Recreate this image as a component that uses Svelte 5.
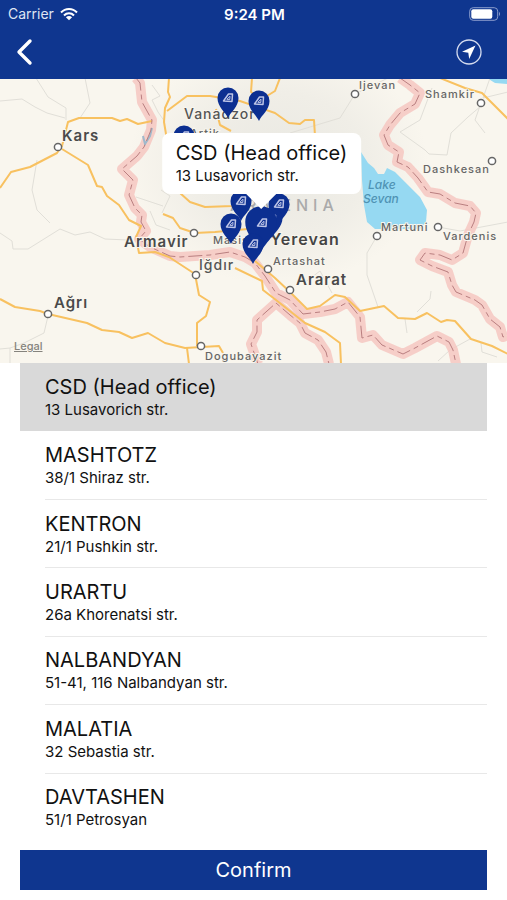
<script lang="ts">
    type Branch = { name: string; address: string }
    type Label = { text: string; x: number; y: number; kind: string }

    const branches: Branch[] = [
        { name: "CSD (Head office)", address: "13 Lusavorich str." },
        { name: "MASHTOTZ", address: "38/1 Shiraz str." },
        { name: "KENTRON", address: "21/1 Pushkin str." },
        { name: "URARTU", address: "26a Khorenatsi str." },
        { name: "NALBANDYAN", address: "51-41, 116 Nalbandyan str." },
        { name: "MALATIA", address: "32 Sebastia str." },
        { name: "DAVTASHEN", address: "51/1 Petrosyan" },
    ]

    let selected = $state(0)
    let current = $derived(branches[selected])

    const labels: Label[] = [
        { text: "Kars", x: 62, y: 141, kind: "city" },
        { text: "Vanadzor", x: 184, y: 119, kind: "town" },
        { text: "Artik", x: 190, y: 137, kind: "village" },
        { text: "Ijevan", x: 359, y: 89, kind: "village" },
        { text: "Shamkir", x: 425, y: 98, kind: "village" },
        { text: "Dashkesan", x: 423, y: 173, kind: "village" },
        { text: "Martuni", x: 381, y: 231, kind: "village" },
        { text: "Vardenis", x: 443, y: 240, kind: "village" },
        { text: "Armavir", x: 124, y: 247, kind: "city" },
        { text: "Masis", x: 213, y: 244, kind: "village" },
        { text: "Yerevan", x: 270, y: 245, kind: "capital" },
        { text: "Iğdır", x: 199, y: 270, kind: "town" },
        { text: "Artashat", x: 273, y: 265, kind: "village" },
        { text: "Ararat", x: 296, y: 285, kind: "city" },
        { text: "Ağrı", x: 54, y: 308, kind: "city" },
        { text: "Dogubayazit", x: 205, y: 360, kind: "village" },
        { text: "ARMENIA", x: 230, y: 211, kind: "country" },
        { text: "Lake", x: 368, y: 189, kind: "water" },
        { text: "Sevan", x: 363, y: 203, kind: "water" },
    ]

    const towns = [
        [58, 147], [355, 94], [481, 103], [492, 161], [377, 236], [438, 227],
        [194, 233], [196, 275], [268, 269], [290, 290], [48, 314], [201, 346],
    ]

    const pins = [
        [228, 118], [259, 121], [184, 156], [241, 221], [279, 224], [231, 244],
    ]

    const borders = [
        "M136 78L140 83L142 102L152 120L151 130L144 147L137 156L122 169L133 180L129 195L135 208L142 215L141 222L146 231L139 239L150 247L170 256L180 257L210 255L230 252L245 257L255 263L265 276L276 293L290 300L303 314L320 312L335 309L348 302L360 317L362 338L373 335L382 345L403 354L415 348L437 336L449 342L453 350L456 364",
        "M258 364L251 344L257 332L257 320L276 303L290 315L300 323L305 333L318 340L326 352L329 364",
        "M400 78L410 85L420 93L415 104L400 113L390 125L384 135L388 145L399 152L397 162L408 167L418 178L428 192L440 194L455 203L470 206L476 213L474 222L468 235L463 253L452 260L440 255L425 253L420 260L432 266L448 272L452 285L456 292L475 300L482 305L490 319L500 327L503 337L508 335",
    ]

    const roads = [
        "M0 188L11 172L30 167L57 153L62 146L68 122L79 118L112 118L120 121L127 119L138 124L152 121",
        "M62 149L88 165L97 186L102 187L107 196L119 205L129 220L141 226L136 237L139 253L155 252L169 257L195 274L199 295L210 302L206 316L197 323L197 346",
        "M0 299L15 307L40 311L48 314L87 323L102 330L119 332L132 338L148 333L165 343L185 348L219 346L223 353",
        "M187 348L189 364",
        "M235 268L262 281L263 290L276 300L305 323L325 332L340 343L341 364",
        "M255 261L275 278L290 292L307 309L320 306L335 295L345 297L360 311L384 306L398 318L415 319L427 313L441 322L447 320L455 321L471 339L492 346L508 354",
        "M163 214L173 218L180 228L195 233L215 232L248 229",
        "M180 193L190 202L205 207L232 206L240 202",
        "M169 78L168 92L170 97L165 108L164 122L167 140",
        "M167 111L187 96L210 96L240 101L275 113L289 123L300 124L305 120L314 120L315 136",
        "M252 78L251 92L262 99L275 91L280 78",
        "M216 109L220 125L231 131",
        "M440 78L465 88L482 93L508 119",
    ]

    const lanes = [
        "M0 101L22 99L35 107L47 113L65 118",
        "M36 78L48 97L66 108L66 120",
        "M85 78L90 103L80 118",
        "M37 160L32 190L37 210L50 223",
        "M0 233L12 241L13 249L28 249L60 229L75 235L90 232L105 239L128 240",
        "M48 316L44 333L24 343L10 348L0 349",
        "M10 348L10 364",
        "M152 85L160 96L152 100L158 112L165 122",
        "M136 197L163 206M161 190L170 196L162 213",
        "M290 133L340 118L355 94L388 78",
        "M432 88L420 120L400 132L425 150L429 154L447 155L451 133L468 117L481 106",
        "M481 103L475 120L485 133M490 78L483 98L508 92",
        "M377 236L367 253L367 275L378 307",
        "M431 291L430 299L417 312M405 319L407 333",
        "M438 227L460 231L508 222",
        "M470 339L450 350L438 361M481 343L482 352L497 357",
        "M304 283L320 271L332 293M170 230L156 225L150 211",
    ]
</script>

<div class="screen">
    <header>
        <div class="status">
            <span class="carrier">
                Carrier
                <svg width="18" height="14" viewBox="0 0 18 14" aria-hidden="true">
                    <g fill="none" stroke="white" stroke-width="2">
                        <path d="M1 5.500C5.500 .8 12.500 .8 17 5.500" />
                        <path d="M4 8.500C6.800 5.600 11.200 5.600 14 8.500" />
                    </g>
                    <path d="M5.900 10.300Q9 7.600 12.100 10.300L9 13.300Z" fill="white" />
                </svg>
            </span>
            <time>9:24 PM</time>
            <svg class="battery" width="32" height="14" viewBox="0 0 32 14" aria-hidden="true">
                <rect x=".7" y=".7" width="28" height="12.600" rx="3.500" fill="none" stroke="#8b9dcc" />
                <rect x="2.300" y="2.300" width="21" height="9.400" rx="2" fill="white" />
                <path d="M30 4.800Q32 7 30 9.200Z" fill="#8b9dcc" />
            </svg>
        </div>
        <nav>
            <button class="icon" aria-label="Back">
                <svg width="18" height="28" viewBox="0 0 18 28">
                    <path
                        d="M15 3L4 14L15 25"
                        fill="none"
                        stroke="white"
                        stroke-width="3.400"
                        stroke-linecap="round"
                        stroke-linejoin="round"
                    />
                </svg>
            </button>
            <button class="icon" aria-label="Show my location">
                <svg width="26" height="26" viewBox="0 0 26 26">
                    <circle cx="13" cy="13" r="12" fill="none" stroke="#d5dcef" stroke-width="1.300" />
                    <path d="M19.500 6.500L6 12.800L12.300 13.800L13.200 20Z" fill="white" />
                </svg>
            </button>
        </nav>
    </header>

    <section class="map" aria-label="Branch map">
        <svg class="canvas" viewBox="0 79 507 284" preserveAspectRatio="xMidYMid slice">
            <defs>
                <radialGradient id="relief">
                    <stop offset="0" stop-color="#e9e8e2" />
                    <stop offset=".6" stop-color="#f0eee7" />
                    <stop offset="1" stop-color="#f9f6ee" />
                </radialGradient>
                <path
                    id="drop"
                    d="M0 0C-2.500 -6 -10.500 -11 -10.500 -20A10.500 10.500 0 0 1 10.500 -20C10.500 -11 2.500 -6 0 0Z"
                    fill="#0c2f91"
                />
                <g id="logo" fill="none" stroke="#bcc4e6" stroke-linejoin="round">
                    <path d="M-4.500 3L.5 -4L4.500 -4L4 3.500Z" stroke-width="1.500" />
                    <path d="M-1.200 1.300L2 -1.800L1.800 1.500Z" stroke-width="1" />
                </g>
            </defs>
            <rect y="79" width="507" height="284" fill="#f9f6ee" />
            <ellipse cx="278" cy="165" rx="150" ry="120" fill="url(#relief)" />
            <path
                d="M361 152L368 163L374 168L378 174L384 174L387 168L395 172L405 182L420 197L427 210L426 222L420 229L375 229L367 222L364 205L362 180Z"
                fill="#96d9f2"
            />
            <path d="M487 78L495 83L508 84V78Z" fill="#96d9f2" />
            {#each lanes as d}
                <path {d} class="lane" />
            {/each}
            {#each borders as d}
                <path {d} class="border-glow" />
            {/each}
            <path d="M143 136L145 144L150 136L152 128" fill="none" stroke="#9fb9cc" stroke-width="2" />
            {#each roads as d}
                <path {d} class="road" />
            {/each}
            {#each borders as d}
                <path {d} class="border-line" />
            {/each}
            {#each towns as [cx, cy]}
                <circle {cx} {cy} r="3.600" class="town-dot" />
            {/each}
            {#each labels as label}
                <text x={label.x} y={label.y} class={label.kind}>{label.text}</text>
            {/each}
            {#each pins as [x, y]}
                <use href="#drop" {x} {y} />
                <use href="#logo" {x} y={y - 20} />
            {/each}
            <use href="#drop" x="272" y="238" />
            <path d="M274 215L276 215L275 222" fill="none" stroke="#7f8fc8" />
            <use href="#drop" transform="translate(261 252) scale(1.500)" />
            <use href="#logo" x="262" y="223" />
            <use href="#drop" x="253" y="264" />
            <use href="#logo" x="253" y="244" />
        </svg>
        <div class="callout">
            <strong>{current.name}</strong>
            <span>{current.address}</span>
        </div>
        <a class="legal" href="#legal">Legal</a>
    </section>

    <ul>
        {#each branches as branch, i}
            <li class:active={i === selected}>
                <button class="branch" onclick={() => (selected = i)}>
                    <strong>{branch.name}</strong>
                    <span>{branch.address}</span>
                </button>
            </li>
        {/each}
    </ul>

    <footer>
        <button class="confirm">Confirm</button>
    </footer>
</div>

<style>
    :global(body) {
        margin: 0;
        background: white;
    }
    .screen {
        min-height: 100vh;
        display: flex;
        flex-direction: column;
        font-family: Inter, "Liberation Sans", sans-serif;
        color: #111;
    }
    button {
        font: inherit;
        color: inherit;
        border: 0;
        padding: 0;
        background: none;
        cursor: pointer;
    }
    strong {
        font-size: 20px;
        line-height: 26px;
        font-weight: 400;
    }
    span {
        font-size: 15px;
        line-height: 20px;
    }
    header {
        height: 79px;
        background: #0f368f;
        color: white;
    }
    .status {
        display: grid;
        grid-template-columns: 1fr auto 1fr;
        align-items: center;
        height: 28px;
        padding: 0 6px 0 8px;
        font-size: 15px;
    }
    .carrier {
        display: flex;
        align-items: center;
        gap: 6px;
        font-size: 14px;
        color: #dfe5f3;
    }
    time {
        font-weight: 600;
    }
    .battery {
        justify-self: end;
    }
    nav {
        display: flex;
        justify-content: space-between;
        align-items: center;
        height: 48px;
        padding: 0 25px 0 15px;
    }
    .icon {
        display: flex;
    }
    .map {
        position: relative;
        height: 284px;
        overflow: hidden;
    }
    .canvas {
        display: block;
        width: 100%;
        height: 100%;
    }
    .lane {
        fill: none;
        stroke: #e1dfd8;
        stroke-width: 1;
    }
    .road {
        fill: none;
        stroke: #f8c160;
        stroke-width: 2;
        stroke-linejoin: round;
    }
    .border-glow {
        fill: none;
        stroke: #f6c7c1;
        stroke-opacity: 0.85;
        stroke-width: 10;
        stroke-linejoin: round;
    }
    .border-line {
        fill: none;
        stroke: #b97f80;
        stroke-width: 1;
        stroke-dasharray: 14 4 5 4;
    }
    .town-dot {
        fill: white;
        stroke: #666;
        stroke-width: 1.5;
    }
    text {
        fill: #555;
        stroke: #f9f6ee;
        stroke-width: 2px;
        paint-order: stroke;
        letter-spacing: 1px;
    }
    .capital {
        font-size: 16px;
        font-weight: 600;
        fill: #444;
    }
    .city {
        font-size: 15px;
        font-weight: 600;
        fill: #4a4a4a;
    }
    .town {
        font-size: 14px;
        font-weight: 500;
    }
    .village {
        font-size: 11px;
        font-weight: 500;
        fill: #666;
    }
    .country {
        font-size: 16px;
        font-weight: 500;
        letter-spacing: 5px;
        fill: #aaa;
        stroke: none;
    }
    .water {
        font-size: 12px;
        font-style: italic;
        font-weight: 500;
        fill: #4f93b4;
        stroke: none;
        letter-spacing: 0;
    }
    .callout {
        position: absolute;
        top: 54px;
        left: calc(50% + 8px);
        transform: translateX(-50%);
        display: flex;
        flex-direction: column;
        padding: 7px 14px 8px;
        border-radius: 8px;
        background: white;
        white-space: nowrap;
    }
    .callout::after {
        content: "";
        position: absolute;
        top: 100%;
        left: 50%;
        margin-left: -15px;
        border: 15px solid transparent;
        border-top-color: white;
        border-bottom-width: 0;
    }
    .legal {
        position: absolute;
        left: 14px;
        bottom: 10px;
        font-size: 11px;
        line-height: 14px;
        font-weight: 500;
        color: #85837d;
    }
    ul {
        flex: 1;
        display: flex;
        flex-direction: column;
        margin: 0;
        padding: 0 20px;
        list-style: none;
    }
    li {
        flex: 1;
        display: flex;
        padding-left: 25px;
    }
    .active {
        background: #d9d9d9;
    }
    .branch {
        flex: 1;
        display: flex;
        flex-direction: column;
        justify-content: center;
        min-height: 64px;
        border-bottom: 1px solid #e8e8e8;
        text-align: left;
    }
    .active .branch,
    li:last-child .branch {
        border-color: transparent;
    }
    footer {
        display: flex;
        padding: 8px 20px 10px;
    }
    .confirm {
        flex: 1;
        height: 40px;
        background: #0f368f;
        color: white;
        font-size: 20px;
    }
</style>
